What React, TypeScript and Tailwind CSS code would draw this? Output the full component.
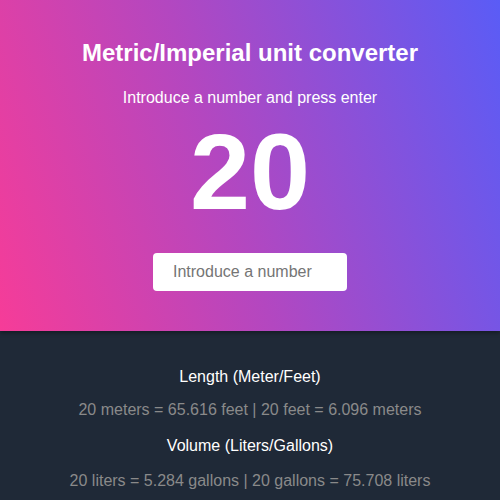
import React from "react";

export default function App() {
  return (
    <div className="w-[500px] h-[500px] overflow-hidden bg-[#1f2937]" style={{ fontFamily: '"Liberation Sans", Arial, sans-serif' }}>
      <section className="h-[331px] flex flex-col items-center bg-[linear-gradient(72deg,#f63c98_0%,#b347c0_45%,#5a5cf6_100%)] shadow-[0_2px_4px_rgba(0,0,0,0.35)] relative">
        <h1 className="mt-[38px] text-[24px] leading-[30px] font-bold text-white">Metric/Imperial unit converter</h1>
        <p className="mt-[20px] text-[16px] leading-[20px] text-white">Introduce a number and press enter</p>
        <div className="mt-[9px] text-[108px] leading-[110px] font-bold text-white">20</div>
        <input
          className="mt-[26px] w-[194px] h-[38px] rounded-[4px] bg-white px-[20px] text-[16px] text-[#333] placeholder:text-[#757575] outline-none"
          placeholder="Introduce a number"
          style={{ fontFamily: '"Liberation Sans", Arial, sans-serif' }}
        />
      </section>
      <section className="flex flex-col items-center pt-[36px] text-[16px]">
        <h2 className="leading-[20px] text-white">Length (Meter/Feet)</h2>
        <p className="mt-[13px] leading-[20px] text-[#8a8a8a]">20 meters = 65.616 feet | 20 feet = 6.096 meters</p>
        <h2 className="mt-[16px] leading-[20px] text-white">Volume (Liters/Gallons)</h2>
        <p className="mt-[15px] leading-[20px] text-[#8a8a8a]">20 liters = 5.284 gallons | 20 gallons = 75.708 liters</p>
      </section>
    </div>
  );
}
